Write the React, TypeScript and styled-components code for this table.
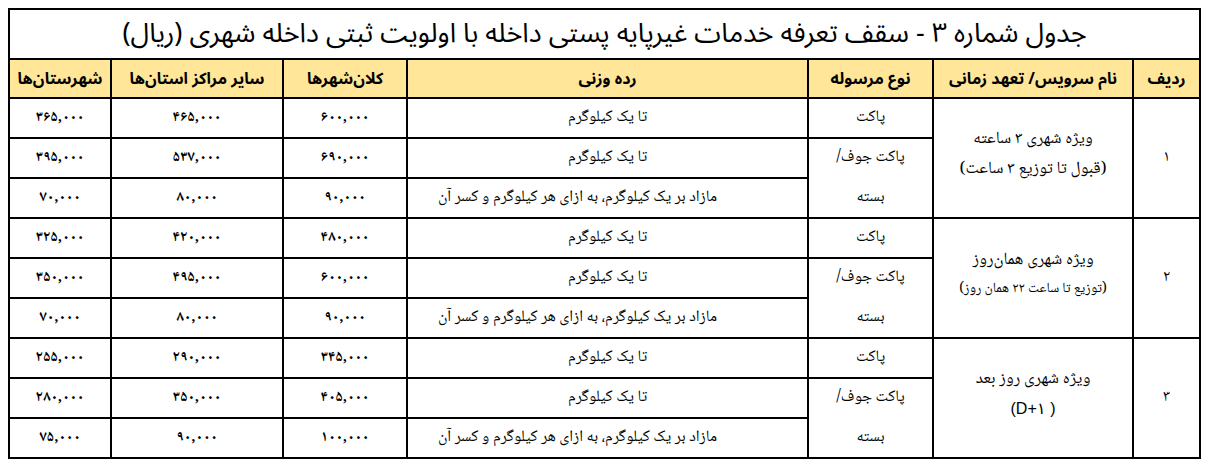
import React from "react";
import styled, { createGlobalStyle } from "styled-components";

const SANS = `"Noto Sans Arabic", "Vazirmatn", "DejaVu Sans", sans-serif`;
const NASKH = `"Noto Naskh Arabic", "Noto Serif Arabic", "DejaVu Serif", "DejaVu Sans", serif`;

const GlobalStyle = createGlobalStyle`
  html, body { margin: 0; padding: 0; background: #ffffff; }
  body { padding: 8px; font-family: ${NASKH}; color: #000; }
`;

const Table = styled.table`
  direction: rtl;
  border-collapse: collapse;
  table-layout: fixed;
  width: 1191px;
`;

const TitleCell = styled.th`
  border: 2px solid #000;
  height: 48px;
  padding: 0;
  font-family: ${SANS};
  font-weight: 400;
  font-size: 27px;
  line-height: 30px;
  text-align: center;
  vertical-align: middle;
`;

const HeadCell = styled.th`
  border: 2px solid #000;
  background: #ffe699;
  height: 37px;
  padding: 0;
  font-family: ${SANS};
  font-weight: 700;
  font-size: 16px;
  line-height: 20px;
  text-align: center;
  vertical-align: middle;
`;

const Cell = styled.td<{ $bold?: boolean; $shift?: number }>`
  border: 2px solid #000;
  height: 38px;
  padding: 0 ${(p) => p.$shift ?? 0}px 0 0;
  font-family: ${NASKH};
  font-weight: ${(p) => (p.$bold ? 700 : 400)};
  font-size: ${(p) => (p.$bold ? 15 : 16)}px;
  line-height: 20px;
  text-align: center;
  vertical-align: middle;
  white-space: nowrap;
`;

const Stack = styled.div<{ $gap: number }>`
  display: flex;
  flex-direction: column;
  align-items: center;
  gap: ${(p) => p.$gap}px;
`;

const ServiceCell = styled.td`
  border: 2px solid #000;
  padding: 0 0 6px 0;
  font-family: ${NASKH};
  font-size: 17px;
  line-height: 22px;
  text-align: center;
  vertical-align: middle;
`;

const SubLine = styled.span<{ $small?: boolean }>`
  font-size: ${(p) => (p.$small ? 14 : 17)}px;
`;

const Latin = styled.bdi`
  font-family: "Liberation Sans", Arial, sans-serif;
  font-size: 16px;
`;

const widths = [67, 200, 125, 401, 124, 172, 102];
const headers = [
  "ردیف",
  "نام سرویس/ تعهد زمانی",
  "نوع مرسوله",
  "رده وزنی",
  "کلان‌شهرها",
  "سایر مراکز استان‌ها",
  "شهرستان‌ها",
];

const weights = [
  "تا یک کیلوگرم",
  "تا یک کیلوگرم",
  "مازاد بر یک کیلوگرم، به ازای هر کیلوگرم و کسر آن",
];

type Group = {
  n: string;
  title: string;
  sub: React.ReactNode;
  small?: boolean;
  gap: number;
  rows: string[][];
};

const groups: Group[] = [
  {
    n: "۱",
    title: "ویژه شهری ۳ ساعته",
    sub: "(قبول تا توزیع ۳ ساعت)",
    gap: 8,
    rows: [
      ["۶۰۰,۰۰۰", "۴۶۵,۰۰۰", "۳۶۵,۰۰۰"],
      ["۶۹۰,۰۰۰", "۵۳۷,۰۰۰", "۳۹۵,۰۰۰"],
      ["۹۰,۰۰۰", "۸۰,۰۰۰", "۷۰,۰۰۰"],
    ],
  },
  {
    n: "۲",
    title: "ویژه شهری همان‌روز",
    sub: "(توزیع تا ساعت ۲۲ همان روز)",
    small: true,
    gap: 6,
    rows: [
      ["۴۸۰,۰۰۰", "۴۲۰,۰۰۰", "۳۲۵,۰۰۰"],
      ["۶۰۰,۰۰۰", "۴۹۵,۰۰۰", "۳۵۰,۰۰۰"],
      ["۹۰,۰۰۰", "۸۰,۰۰۰", "۷۰,۰۰۰"],
    ],
  },
  {
    n: "۳",
    title: "ویژه شهری روز بعد",
    sub: <Latin dir="ltr">(D+۱ )</Latin>,
    gap: 7,
    rows: [
      ["۳۴۵,۰۰۰", "۲۹۰,۰۰۰", "۲۵۵,۰۰۰"],
      ["۴۰۵,۰۰۰", "۳۵۰,۰۰۰", "۲۸۰,۰۰۰"],
      ["۱۰۰,۰۰۰", "۹۰,۰۰۰", "۷۵,۰۰۰"],
    ],
  },
];

export default function App() {
  return (
    <>
      <GlobalStyle />
      <Table>
        <colgroup>
          {widths.map((w, i) => (
            <col key={i} style={{ width: w }} />
          ))}
        </colgroup>
        <thead>
          <tr>
            <TitleCell colSpan={7}>
              جدول شماره ۳ - سقف تعرفه خدمات غیرپایه پستی داخله با اولویت ثبتی داخله شهری (ریال)
            </TitleCell>
          </tr>
          <tr>
            {headers.map((h) => (
              <HeadCell key={h}>{h}</HeadCell>
            ))}
          </tr>
        </thead>
        <tbody>
          {groups.map((g) =>
            g.rows.map((r, i) => (
              <tr key={g.n + i}>
                {i === 0 && (
                  <>
                    <Cell rowSpan={3}>{g.n}</Cell>
                    <ServiceCell rowSpan={3}>
                      <Stack $gap={g.gap}>
                        <span>{g.title}</span>
                        <SubLine $small={g.small}>{g.sub}</SubLine>
                      </Stack>
                    </ServiceCell>
                    <Cell>پاکت</Cell>
                  </>
                )}
                {i === 1 && (
                  <Cell rowSpan={2}>
                    <Stack $gap={20}>
                      <span>پاکت جوف/</span>
                      <span>بسته</span>
                    </Stack>
                  </Cell>
                )}
                <Cell $shift={i === 2 ? 60 : 0}>{weights[i]}</Cell>
                {r.map((v, k) => (
                  <Cell key={k} $bold>
                    {v}
                  </Cell>
                ))}
              </tr>
            ))
          )}
        </tbody>
      </Table>
    </>
  );
}
